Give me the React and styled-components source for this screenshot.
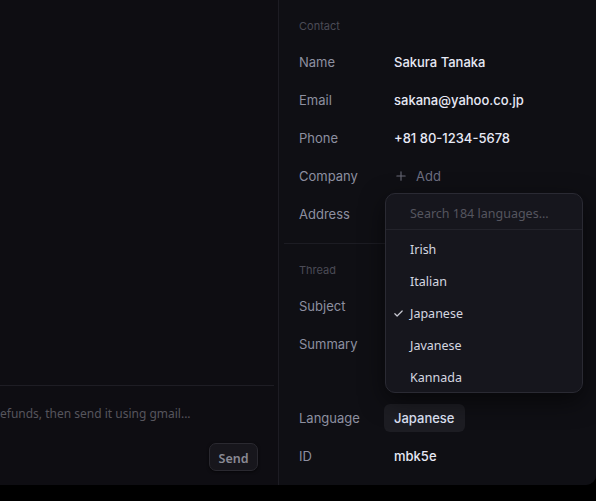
import React, { useState } from "react";
import styled, { createGlobalStyle } from "styled-components";

const GlobalStyle = createGlobalStyle`
  html, body {
    margin: 0;
    padding: 0;
    background: #000;
  }
  * {
    box-sizing: border-box;
  }
`;

const Shell = styled.div`
  display: flex;
  height: 485px;
  width: 596px;
  background: #0e0d12;
  border-bottom-right-radius: 10px;
  overflow: hidden;
  font-family: Inter, "Noto Sans", sans-serif;
`;

const ChatPane = styled.div`
  width: 279px;
  flex-shrink: 0;
  display: flex;
  flex-direction: column;
  border-right: 1px solid #1d1c23;
`;

const Messages = styled.div`
  flex: 1;
`;

const Composer = styled.div`
  margin-right: 4px;
  border-top: 1px solid #1e1d24;
  padding: 17px 16px 14px 0;
  display: flex;
  flex-direction: column;
  gap: 22px;
`;

const Prompt = styled.div`
  font-family: "Noto Sans", "Open Sans", sans-serif;
  font-size: 12px;
  line-height: 18px;
  color: #56555d;
  white-space: nowrap;
  padding-top: 2px;
`;

const ComposerActions = styled.div`
  display: flex;
  justify-content: flex-end;
  margin-top: -2px;
`;

const SendButton = styled.button`
  height: 28px;
  width: 49px;
  padding: 2px 0 0;
  border-radius: 7px;
  border: 1px solid #2a2930;
  background: #17161c;
  color: #8a8a94;
  font-family: "Noto Sans", "Open Sans", sans-serif;
  font-size: 12.5px;
  font-weight: 600;
  box-shadow: 0 1px 3px rgba(0, 0, 0, 0.6);
  cursor: pointer;
`;

const DetailsPane = styled.div`
  flex: 1;
  background: #0f0f14;
  padding: 16px 20px 10px 20px;
  display: flex;
  flex-direction: column;
`;

const SectionTitle = styled.div`
  font-size: 11px;
  line-height: 20px;
  color: #4b4b56;
  margin-bottom: 7px;
`;

const Divider = styled.div`
  height: 1px;
  background: #1c1c23;
  margin: 10px -2px 16px -15px;
`;

const Row = styled.div`
  display: flex;
  align-items: ${(p) => (p.$tall ? "flex-start" : "center")};
  min-height: ${(p) => (p.$tall ? "74px" : "38px")};
  padding-top: ${(p) => (p.$tall ? "10px" : "0")};
  font-size: 13px;
  line-height: 18px;
`;

const Label = styled.div`
  width: 95px;
  flex-shrink: 0;
  color: #8d8fa0;
`;

const Value = styled.div`
  position: relative;
  flex: 1;
  color: #e7e9f6;
  font-weight: 500;
`;

const AddButton = styled.div`
  display: flex;
  align-items: center;
  gap: 10px;
  color: #6c6e80;
  font-weight: 400;
  margin-left: 2px;
`;

const Pill = styled.span`
  display: inline-flex;
  align-items: center;
  height: 28px;
  margin-left: -10px;
  padding: 0 10px;
  border-radius: 6px;
  background: #1d1d23;
  color: #dfe3f6;
  font-weight: 500;
`;

const Popover = styled.div`
  position: absolute;
  left: -9px;
  bottom: calc(100% + 11px);
  width: 198px;
  background: #16161d;
  border: 1px solid #2a2a33;
  border-radius: 10px;
  box-shadow: 0 8px 24px rgba(0, 0, 0, 0.55);
  overflow: hidden;
  font-family: "Noto Sans", "Open Sans", sans-serif;
  font-weight: 400;
  z-index: 5;
`;

const Search = styled.input`
  display: block;
  width: 100%;
  height: 36px;
  border: none;
  border-bottom: 1px solid #23232b;
  outline: none;
  background: transparent;
  padding: 4px 0 0 24px;
  font-family: inherit;
  font-size: 12.5px;
  color: #d6d8e2;
  &::placeholder {
    color: #55555f;
  }
`;

const List = styled.div`
  padding-top: 2px;
`;

const Option = styled.div`
  display: flex;
  align-items: center;
  height: 32px;
  padding: 4px 0 0 7px;
  font-size: 12.5px;
  color: #d5d7e0;
`;

const CheckSlot = styled.span`
  width: 17px;
  display: flex;
  align-items: center;
  margin-top: -1px;
`;

const Check = () => (
  <svg width="11" height="11" viewBox="0 0 24 24" fill="none" stroke="#c6c7d0" strokeWidth="2.6" strokeLinecap="round" strokeLinejoin="round">
    <path d="M4 12.5l5 5L20 6.5" />
  </svg>
);

const Plus = () => (
  <svg width="10" height="10" viewBox="0 0 12 12" fill="none" stroke="#6a6b78" strokeWidth="1.3" strokeLinecap="round">
    <path d="M6 1v10M1 6h10" />
  </svg>
);

const languages = ["Irish", "Italian", "Japanese", "Javanese", "Kannada"];

export default function App() {
  const [language, setLanguage] = useState("Japanese");

  return (
    <>
      <GlobalStyle />
      <Shell>
        <ChatPane>
          <Messages />
          <Composer>
            <Prompt>efunds, then send it using gmail...</Prompt>
            <ComposerActions>
              <SendButton>Send</SendButton>
            </ComposerActions>
          </Composer>
        </ChatPane>

        <DetailsPane>
          <SectionTitle>Contact</SectionTitle>
          <Row>
            <Label>Name</Label>
            <Value>Sakura Tanaka</Value>
          </Row>
          <Row>
            <Label>Email</Label>
            <Value>sakana@yahoo.co.jp</Value>
          </Row>
          <Row>
            <Label>Phone</Label>
            <Value>+81 80-1234-5678</Value>
          </Row>
          <Row>
            <Label>Company</Label>
            <Value>
              <AddButton>
                <Plus />
                Add
              </AddButton>
            </Value>
          </Row>
          <Row>
            <Label>Address</Label>
            <Value />
          </Row>

          <Divider />

          <SectionTitle>Thread</SectionTitle>
          <Row>
            <Label>Subject</Label>
            <Value />
          </Row>
          <Row $tall>
            <Label>Summary</Label>
            <Value />
          </Row>
          <Row>
            <Label>Language</Label>
            <Value>
              <Pill>{language}</Pill>
              <Popover>
                <Search placeholder="Search 184 languages..." />
                <List>
                  {languages.map((l) => (
                    <Option key={l} onClick={() => setLanguage(l)}>
                      <CheckSlot>{l === language && <Check />}</CheckSlot>
                      {l}
                    </Option>
                  ))}
                </List>
              </Popover>
            </Value>
          </Row>
          <Row>
            <Label>ID</Label>
            <Value>mbk5e</Value>
          </Row>
        </DetailsPane>
      </Shell>
    </>
  );
}
